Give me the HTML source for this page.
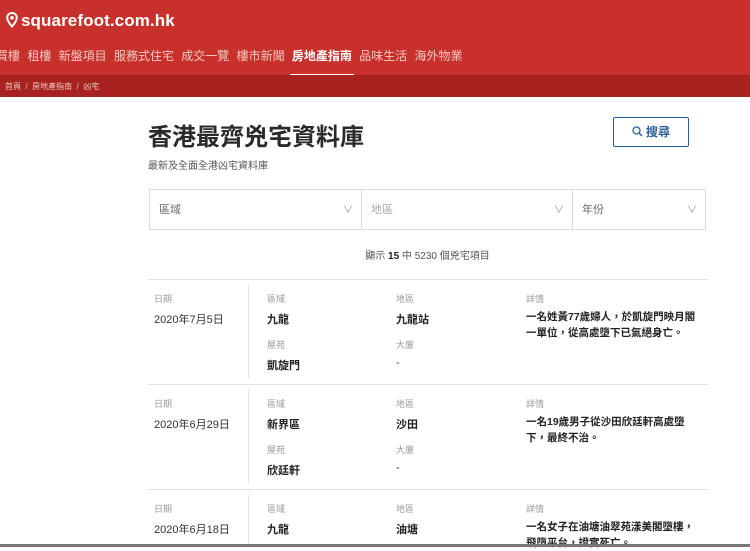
<!DOCTYPE html>
<html><head><meta charset="utf-8"><style>
*{margin:0;padding:0;box-sizing:border-box}
body{width:750px;height:547px;overflow:hidden;background:#fff;font-family:"Liberation Sans","Noto Sans CJK TC",sans-serif;color:#333;position:relative}
.hdr{position:absolute;left:0;top:0;width:750px;height:75px;background:#c8302b}
.logo{position:absolute;left:6px;top:11px;color:#fff;font-size:17px;font-weight:bold;letter-spacing:.1px}
.nav{position:absolute;top:47px;left:-4px;color:#f3c8c4;font-size:12px;white-space:nowrap}
.nav span{margin-right:7.3px}
.nav .on{color:#fff;font-weight:bold;position:relative}
.nav .on:after{content:"";position:absolute;left:-2px;right:-2px;top:25px;height:2px;background:#fff}
.bc{position:absolute;left:0;top:75px;width:750px;height:22px;background:#a8231f;color:#f0c5c0;font-size:8px;padding:6px 0 0 5px}
.a{position:absolute;white-space:nowrap}
.t{left:148px;top:117px;font-size:24px;font-weight:bold;color:#2a2a2a}
.st{left:148px;top:157px;font-size:10px;color:#555}
.btn{left:613px;top:117px;width:76px;height:30px;border:1px solid #2b5d9a;border-radius:2px;color:#2b5d9a;font-size:12px;font-weight:bold;text-align:center;line-height:28px}
.flt{position:absolute;top:189px;height:41px;border:1px solid #ddd;font-size:11px;color:#666;padding:11px 0 0 9px}
.flt i{position:absolute;right:8px;top:11px;font-style:normal;color:#999;font-size:10px}
.cnt{left:0;width:855px;text-align:center;top:247px;font-size:10px;color:#555}
.hl{position:absolute;left:148px;width:560px;height:1px;background:#e2e2e2}
.vl{position:absolute;left:248px;width:1px;background:#e2e2e2}
.lb{font-size:9px;color:#999}
.v{font-size:11px;color:#333}
.vb{font-size:11px;color:#222;font-weight:bold}
.d{font-size:10.5px;color:#222;font-weight:bold;line-height:16px}
.bot{position:absolute;left:0;top:544px;width:750px;height:3px;background:#777}
</style></head><body>
<div class="hdr">
<div class="logo"><svg width="12" height="16" viewBox="0 0 12 16" style="vertical-align:-2px;margin-right:3px"><path d="M6 1C3.2 1 1.2 3.1 1.2 5.8 1.2 9.2 6 14.5 6 14.5S10.8 9.2 10.8 5.8C10.8 3.1 8.8 1 6 1z" fill="none" stroke="#fff" stroke-width="2"/><circle cx="6" cy="5.8" r="1.8" fill="#fff"/></svg>squarefoot.com.hk</div>
<div class="nav"><span>買樓</span><span>租樓</span><span>新盤項目</span><span>服務式住宅</span><span>成交一覽</span><span>樓市新聞</span><span class="on">房地產指南</span><span>品味生活</span><span>海外物業</span></div>
</div>
<div class="bc">首頁 &nbsp;/&nbsp; 房地產指南 &nbsp;/&nbsp; 凶宅</div>
<div class="a t">香港最齊兇宅資料庫</div>
<div class="a st">最新及全面全港凶宅資料庫</div>
<div class="a btn"><svg width="11" height="11" viewBox="0 0 11 11" style="vertical-align:-1px;margin-right:3px"><circle cx="4.5" cy="4.5" r="3.5" fill="none" stroke="#2b5d9a" stroke-width="1.3"/><path d="M7 7l3 3" stroke="#2b5d9a" stroke-width="1.3"/></svg>搜尋</div>
<div class="flt" style="left:149px;width:213px">區域<i>∨</i></div>
<div class="flt" style="left:361px;width:212px;color:#aaa">地區<i>∨</i></div>
<div class="flt" style="left:572px;width:134px">年份<i>∨</i></div>
<div class="a cnt">顯示 <b style="color:#222">15</b> 中 5230 個兇宅項目</div>
<div class="hl" style="top:279px"></div>
<div class="vl" style="top:285px;height:93px"></div>
<div class="hl" style="top:384px"></div>
<div class="vl" style="top:390px;height:93px"></div>
<div class="hl" style="top:489px"></div>
<div class="vl" style="top:495px;height:50px"></div>

<div class="a lb" style="left:154px;top:292px">日期</div>
<div class="a v" style="left:154px;top:311px">2020年7月5日</div>
<div class="a lb" style="left:267px;top:292px">區域</div>
<div class="a vb" style="left:267px;top:311px">九龍</div>
<div class="a lb" style="left:267px;top:338px">屋苑</div>
<div class="a vb" style="left:267px;top:357px">凱旋門</div>
<div class="a lb" style="left:396px;top:292px">地區</div>
<div class="a vb" style="left:396px;top:311px">九龍站</div>
<div class="a lb" style="left:396px;top:338px">大廈</div>
<div class="a v" style="left:396px;top:357px">-</div>
<div class="a lb" style="left:526px;top:292px">詳情</div>
<div class="a d" style="left:526px;top:309px">一名姓黃77歲婦人，於凱旋門映月閣<br>一單位，從高處墮下已氣絕身亡。</div>

<div class="a lb" style="left:154px;top:397px">日期</div>
<div class="a v" style="left:154px;top:416px">2020年6月29日</div>
<div class="a lb" style="left:267px;top:397px">區域</div>
<div class="a vb" style="left:267px;top:416px">新界區</div>
<div class="a lb" style="left:267px;top:443px">屋苑</div>
<div class="a vb" style="left:267px;top:462px">欣廷軒</div>
<div class="a lb" style="left:396px;top:397px">地區</div>
<div class="a vb" style="left:396px;top:416px">沙田</div>
<div class="a lb" style="left:396px;top:443px">大廈</div>
<div class="a v" style="left:396px;top:462px">-</div>
<div class="a lb" style="left:526px;top:397px">詳情</div>
<div class="a d" style="left:526px;top:414px">一名19歲男子從沙田欣廷軒高處墮<br>下，最終不治。</div>

<div class="a lb" style="left:154px;top:502px">日期</div>
<div class="a v" style="left:154px;top:521px">2020年6月18日</div>
<div class="a lb" style="left:267px;top:502px">區域</div>
<div class="a vb" style="left:267px;top:521px">九龍</div>
<div class="a lb" style="left:396px;top:502px">地區</div>
<div class="a vb" style="left:396px;top:521px">油塘</div>
<div class="a lb" style="left:526px;top:502px">詳情</div>
<div class="a d" style="left:526px;top:519px">一名女子在油塘油翠苑漾美閣墮樓，<br>飛墮平台，證實死亡。</div>
<div class="bot"></div>
</body></html>
